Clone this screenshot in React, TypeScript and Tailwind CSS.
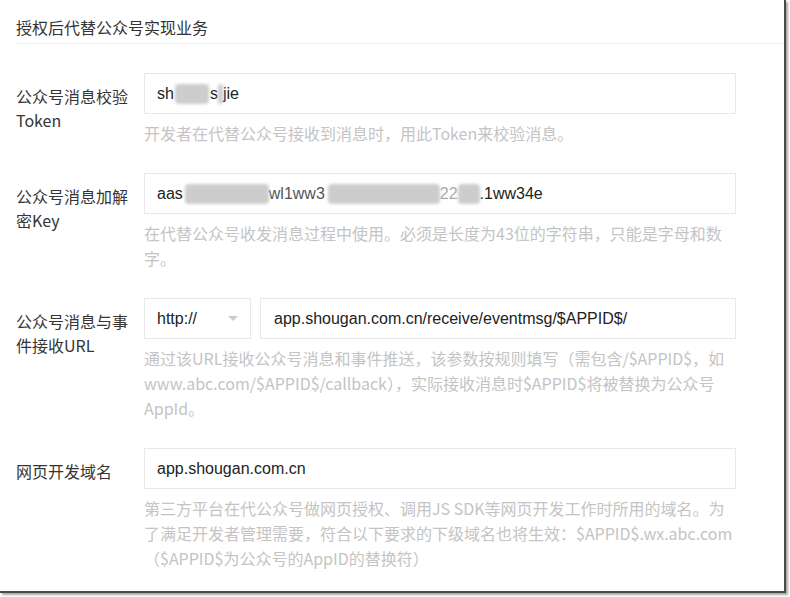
import React from "react";

const cjk = "font-['Noto_Sans_CJK_SC','Noto_Sans',sans-serif]";
const latin = "font-['Liberation_Sans',Arial,sans-serif]";

function Blob({ w, className = "" }: { w: number; className?: string }) {
  // mosaic / blur patch that hides part of a secret value
  return (
    <span
      className={`inline-block h-[20px] align-middle rounded-sm bg-[#cdcdcd] blur-[1.5px] ${className}`}
      style={{ width: w }}
    />
  );
}

function Field({ label, help, children }: { label: string; help: string[]; children: React.ReactNode }) {
  return (
    <div className="flex">
      <div className={`w-[128px] shrink-0 pr-[14px] pt-[11px] text-[16px] leading-[24px] text-[#353535] ${cjk}`}>
        {label}
      </div>
      <div className="w-[592px]">
        {children}
        <div className={`mt-[7px] text-[16px] leading-[25px] text-[#c4c4c4] ${cjk}`}>
          {help.map((line) => (
            <div key={line} className="whitespace-nowrap">{line}</div>
          ))}
        </div>
      </div>
    </div>
  );
}

function Box({ children, className = "" }: { children: React.ReactNode; className?: string }) {
  return (
    <div
      className={`flex h-[41px] items-center border border-[#e9e9e9] bg-white pl-[12px] text-[16px] text-[#222] ${latin} ${className}`}
    >
      {children}
    </div>
  );
}

export default function App() {
  return (
    <div className="h-[597px] w-[790px] overflow-hidden bg-white">
      <div className="h-[593px] w-[786px] border-b-2 border-r-2 border-[#4a4a4a] shadow-[2px_2px_2px_rgba(0,0,0,0.35)]">
        <div className={`ml-4 border-b border-[#eeeeee] pb-[4px] pt-[15px] text-[16px] leading-[24px] text-[#333] ${cjk}`}>
          授权后代替公众号实现业务
        </div>

        <div className="flex flex-col gap-[27px] pl-4 pt-[29px]">
          <Field label="公众号消息校验Token" help={["开发者在代替公众号接收到消息时，用此Token来校验消息。"]}>
            <Box>
              <span>sh</span>
              <Blob w={34} className="mx-[1px]" />
              <span>s</span>
              <Blob w={5} />
              <span>jie</span>
            </Box>
          </Field>

          <Field
            label="公众号消息加解密Key"
            help={["在代替公众号收发消息过程中使用。必须是长度为43位的字符串，只能是字母和数", "字。"]}
          >
            <Box>
              <span>aas</span>
              <Blob w={84} className="ml-[2px]" />
              <span className="text-[#555]">wl1ww3</span>
              <Blob w={112} className="ml-[3px]" />
              <span className="text-[#aaa]">22</span>
              <Blob w={22} />
              <span>.1ww34e</span>
            </Box>
          </Field>

          <Field
            label="公众号消息与事件接收URL"
            help={[
              "通过该URL接收公众号消息和事件推送，该参数按规则填写（需包含/$APPID$，如",
              "www.abc.com/$APPID$/callback），实际接收消息时$APPID$将被替换为公众号",
              "AppId。",
            ]}
          >
            <div className="flex gap-[9px]">
              <Box className="w-[107px] justify-between pr-[12px]">
                <span>http://</span>
                <span className="h-0 w-0 border-x-[5px] border-t-[5px] border-x-transparent border-t-[#cccccc]" />
              </Box>
              <Box className="flex-1 pl-[13px]">app.shougan.com.cn/receive/eventmsg/$APPID$/</Box>
            </div>
          </Field>

          <Field
            label="网页开发域名"
            help={[
              "第三方平台在代公众号做网页授权、调用JS SDK等网页开发工作时所用的域名。为",
              "了满足开发者管理需要，符合以下要求的下级域名也将生效：$APPID$.wx.abc.com",
              "（$APPID$为公众号的AppID的替换符）",
            ]}
          >
            <Box>app.shougan.com.cn</Box>
          </Field>
        </div>
      </div>
    </div>
  );
}
